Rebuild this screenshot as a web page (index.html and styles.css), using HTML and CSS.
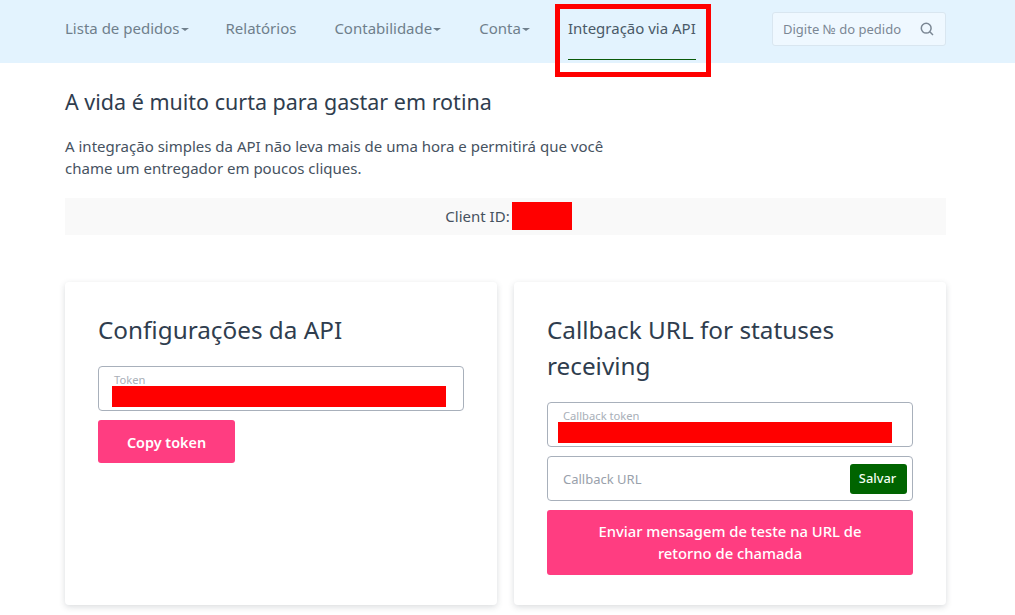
FILE: index.html
```html
<!DOCTYPE html>
<html lang="pt">
<head>
<meta charset="utf-8">
<title>Integração via API</title>
<link rel="stylesheet" href="styles.css">
</head>
<body>
<header class="topbar">
  <nav class="nav">
    <a class="nav-item nav-lista">Lista de pedidos<span class="caret"></span></a>
    <a class="nav-item nav-rel">Relatórios</a>
    <a class="nav-item nav-cont">Contabilidade<span class="caret"></span></a>
    <a class="nav-item nav-conta">Conta<span class="caret"></span></a>
    <a class="nav-item nav-active">Integração via API</a>
  </nav>
  <div class="search">
    <span class="search-text">Digite № do pedido</span>
    <svg class="search-icon" width="14" height="14" viewBox="0 0 14 14" fill="none" stroke="#7b8794" stroke-width="1.5"><circle cx="6.2" cy="6.2" r="4.9"/><path d="M9.8 9.8 13 13"/></svg>
  </div>
</header>
<div class="annotation"></div>
<main class="content">
  <h1 class="headline">A vida é muito curta para gastar em rotina</h1>
  <p class="lead">A integração simples da API não leva mais de uma hora e permitirá que você chame um entregador em poucos cliques.</p>
  <div class="client">Client ID:<span class="redact-id"></span></div>
  <div class="cards">
    <section class="card">
      <h2 class="card-title">Configurações da API</h2>
      <div class="field field-filled">
        <span class="field-label">Token</span>
        <span class="redact-field"></span>
      </div>
      <button class="btn btn-small">Copy token</button>
    </section>
    <section class="card">
      <h2 class="card-title">Callback URL for statuses receiving</h2>
      <div class="field field-filled">
        <span class="field-label">Callback token</span>
        <span class="redact-field redact-shift"></span>
      </div>
      <div class="field field-url">
        <span class="field-placeholder">Callback URL</span>
        <button class="btn-save">Salvar</button>
      </div>
      <button class="btn btn-wide">Enviar mensagem de teste na URL de retorno de chamada</button>
    </section>
  </div>
</main>
</body>
</html>
```
FILE: styles.css
```css
* { box-sizing: border-box; }
html, body { margin: 0; padding: 0; }
body {
  font-family: "Noto Sans", "Open Sans", sans-serif;
  color: #3d4852;
  background: #fff;
  height: 615px;
  overflow: hidden;
}
.topbar {
  height: 63px;
  background: #e3f3fe;
  padding: 0 69px 0 65px;
  display: flex;
  justify-content: space-between;
  align-items: flex-start;
}
.nav { display: flex; height: 60px; }
.nav-item {
  font-size: 15px;
  line-height: 20px;
  padding-top: 18px;
  color: #6f7f8c;
  display: block;
}
.nav-lista { margin-right: 37px; }
.nav-rel { margin-right: 38px; }
.nav-cont { margin-right: 38px; }
.nav-conta { margin-right: 38px; }
.nav-active {
  color: #4a5a68;
  border-bottom: 1px solid #0a5a0a;
}
.caret {
  display: inline-block;
  width: 0;
  height: 0;
  margin-left: 1px;
  vertical-align: middle;
  border-top: 3px solid #6f7f8c;
  border-left: 4px solid transparent;
  border-right: 4px solid transparent;
}
.search {
  margin-top: 12px;
  width: 174px;
  height: 34px;
  border: 1px solid #d9e6f0;
  border-radius: 3px;
  background: #eff8ff;
  display: flex;
  align-items: center;
  justify-content: space-between;
  padding: 0 11px 0 10px;
}
.search-text { font-size: 13px; color: #7b8794; }
.annotation {
  position: absolute;
  left: 555px;
  top: 4px;
  width: 156px;
  height: 73px;
  border: 5px solid #ff0000;
}
.content { padding: 0 69px 0 65px; }
.headline {
  margin: 26px 0 0;
  font-size: 21.5px;
  line-height: 26px;
  font-weight: 400;
  color: #2f3d4e;
}
.lead {
  margin: 20px 0 0;
  width: 560px;
  font-size: 15px;
  line-height: 22px;
  color: #46525f;
}
.client {
  margin-top: 19px;
  height: 37px;
  background: #f9f9f9;
  display: flex;
  justify-content: center;
  align-items: center;
  padding: 0 0 2px 6px;
  font-size: 15px;
  color: #46525f;
}
.redact-id {
  width: 60px;
  height: 28px;
  margin-left: 2px;
  background: #ff0000;
  align-self: flex-start;
  margin-top: 4px;
}
.cards {
  margin-top: 47px;
  display: grid;
  grid-template-columns: 432px 432px;
  gap: 17px;
}
.card {
  height: 323px;
  background: #fff;
  border-radius: 4px;
  box-shadow: 0 2px 6px rgba(50, 60, 70, 0.18);
  padding: 30px 33px 0;
}
.card-title {
  margin: 0 0 18px;
  font-size: 24.3px;
  line-height: 36px;
  font-weight: 400;
  color: #2f3d4e;
}
.field {
  position: relative;
  height: 45px;
  border: 1px solid #a8b0bb;
  border-radius: 4px;
  background: #fff;
}
.field-filled { margin-bottom: 9px; }
.field-label {
  position: absolute;
  left: 15px;
  top: 6px;
  font-size: 11.2px;
  line-height: 13px;
  color: #a9afb8;
}
.redact-field {
  position: absolute;
  left: 13px;
  top: 19px;
  width: 334px;
  height: 21px;
  background: #ff0000;
}
.redact-shift { left: 10px; }
.field-url {
  margin-bottom: 9px;
  display: flex;
  align-items: center;
  justify-content: space-between;
  padding: 0 5px 0 15px;
}
.field-placeholder { font-size: 13px; color: #99a1ab; }
.btn-save {
  width: 57px;
  height: 30px;
  border: 0;
  border-radius: 3px;
  background: #006400;
  color: #f3fff3;
  font: 500 12.8px "Noto Sans", sans-serif;
  padding: 0 2px 2px 0;
}
.btn {
  display: block;
  border: 0;
  border-radius: 3px;
  background: #ff3d81;
  color: #fff;
  font-family: "Noto Sans", sans-serif;
  font-size: 14.4px;
  font-weight: 600;
  padding: 0;
}
.btn-small { width: 137px; height: 43px; padding-top: 2px; }
.btn-wide {
  width: 366px;
  height: 65px;
  font-size: 14.8px;
  font-weight: 500;
  line-height: 22px;
  padding: 0 40px 2px;
}
```
